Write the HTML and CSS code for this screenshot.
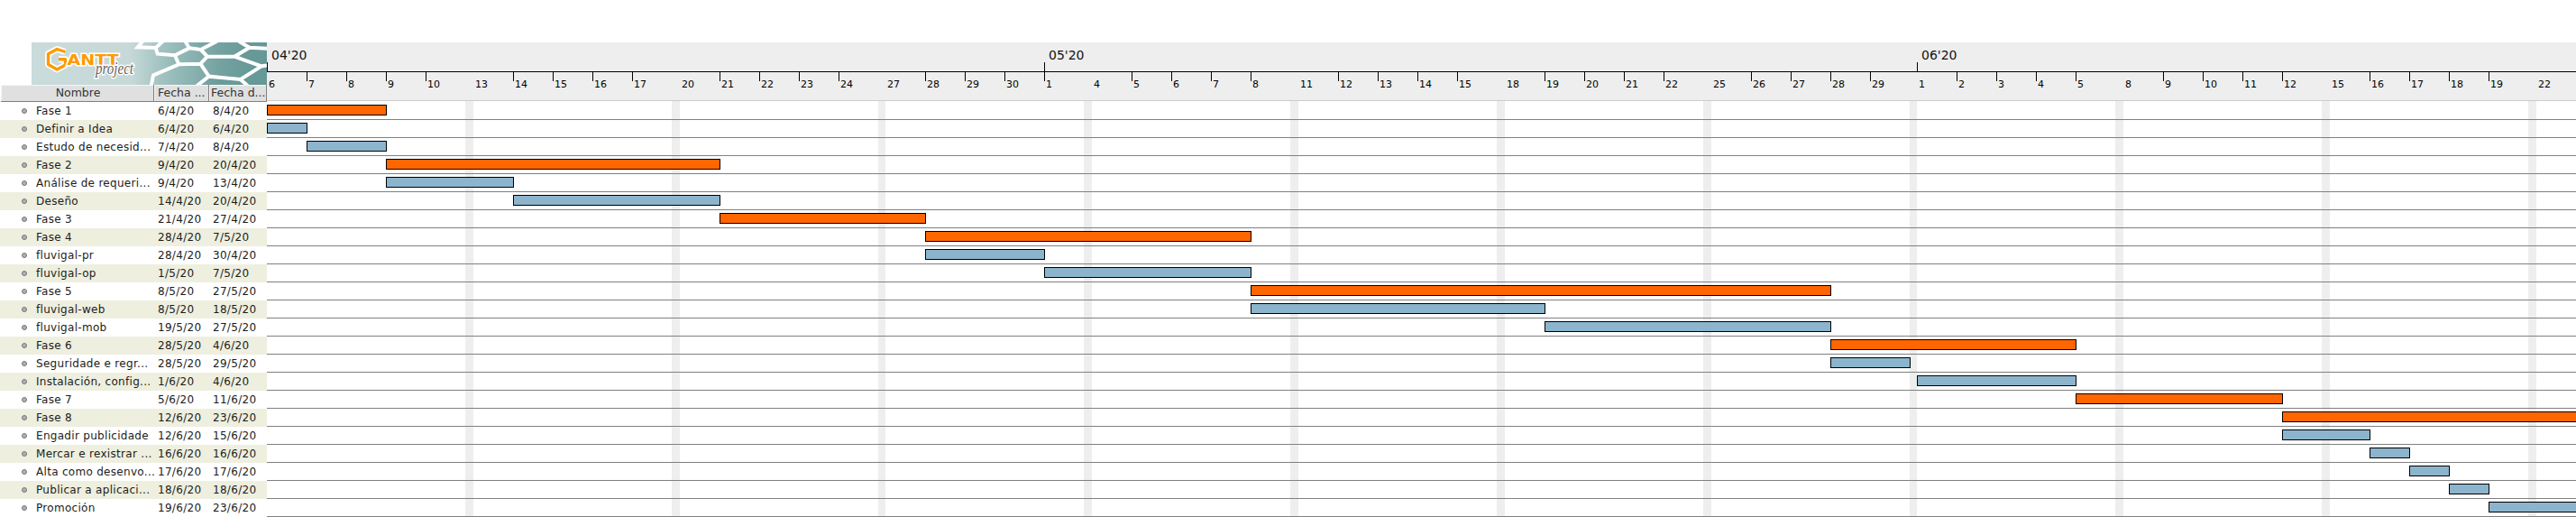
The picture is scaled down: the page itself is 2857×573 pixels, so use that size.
FILE: index.html
```html
<!DOCTYPE html>
<html lang="gl">
<head>
<meta charset="utf-8">
<title>GanttProject</title>
<link rel="stylesheet" href="styles.css">
</head>
<body>
<div class="app">
  <section class="tasks">
    <svg class="logo" width="261" height="47" viewBox="0 0 261 47">
      <defs>
        <linearGradient id="bg" x1="0" x2="1" y1="0" y2="0">
          <stop offset="0" stop-color="#c9dbda"/><stop offset=".42" stop-color="#c6d9d8"/>
          <stop offset=".62" stop-color="#8fb6b4"/><stop offset=".8" stop-color="#699b99"/><stop offset="1" stop-color="#659896"/>
        </linearGradient>
        <linearGradient id="cell" x1="0" x2="1" y1="0" y2="0">
          <stop offset="0" stop-color="#a9c8c6"/><stop offset="1" stop-color="#5f9492"/>
        </linearGradient>
      </defs>
      <rect width="261" height="47" fill="url(#bg)"/>
      <g transform="translate(115 -3) scale(.33333)">
        <path d="M68 27 90 8H165L180 28 132 50H70ZM145 82 132 50 180 28 218 32 240 62 215 80ZM60 120 145 82H215L245 122 205 152H52ZM218 32 268 8H345L380 26 330 56 240 56ZM240 62 330 56 420 88 350 132 245 122 215 80Z" fill="url(#cell)" opacity=".6"/>
        <path d="M25 5 8 25 68 27 92 5M68 27 74 47 132 52 180 28 166 5M180 28 218 33 272 5M218 33 240 56 330 56 380 26 345 5M380 26 440 29M330 56 420 88 440 85M420 88 350 132 376 155M350 132 245 122 203 155M245 122 217 80 240 56M217 80 145 82 132 52M145 82 60 118 53 155" fill="none" stroke="#fff" stroke-width="12"/>
      </g>
      <path class="halo" d="M37.5 10.5 28.3 7.5 18.5 12.7V24.5L28.3 30 37.5 25V18.7H30"/>
      <path class="hex" d="M37.5 10.5 28.3 7.5 18.5 12.7V24.5L28.3 30 37.5 25V18.7H30"/>
      <text class="brand" x="39.5" y="24.7" textLength="57" lengthAdjust="spacingAndGlyphs">ANTT</text>
      <text class="sub" x="71" y="35" textLength="42" lengthAdjust="spacingAndGlyphs">project</text>
    </svg>
    <div class="head"><span>Nombre</span><span>Fecha ...</span><span>Fecha d...</span></div>
    <div class="task"><i></i><b>Fase 1</b><span>6/4/20</span><span>8/4/20</span></div>
    <div class="task"><i></i><b>Definir a Idea</b><span>6/4/20</span><span>6/4/20</span></div>
    <div class="task"><i></i><b>Estudo de necesid...</b><span>7/4/20</span><span>8/4/20</span></div>
    <div class="task"><i></i><b>Fase 2</b><span>9/4/20</span><span>20/4/20</span></div>
    <div class="task"><i></i><b>Análise de requeri...</b><span>9/4/20</span><span>13/4/20</span></div>
    <div class="task"><i></i><b>Deseño</b><span>14/4/20</span><span>20/4/20</span></div>
    <div class="task"><i></i><b>Fase 3</b><span>21/4/20</span><span>27/4/20</span></div>
    <div class="task"><i></i><b>Fase 4</b><span>28/4/20</span><span>7/5/20</span></div>
    <div class="task"><i></i><b>fluvigal-pr</b><span>28/4/20</span><span>30/4/20</span></div>
    <div class="task"><i></i><b>fluvigal-op</b><span>1/5/20</span><span>7/5/20</span></div>
    <div class="task"><i></i><b>Fase 5</b><span>8/5/20</span><span>27/5/20</span></div>
    <div class="task"><i></i><b>fluvigal-web</b><span>8/5/20</span><span>18/5/20</span></div>
    <div class="task"><i></i><b>fluvigal-mob</b><span>19/5/20</span><span>27/5/20</span></div>
    <div class="task"><i></i><b>Fase 6</b><span>28/5/20</span><span>4/6/20</span></div>
    <div class="task"><i></i><b>Seguridade e regr...</b><span>28/5/20</span><span>29/5/20</span></div>
    <div class="task"><i></i><b>Instalación, config...</b><span>1/6/20</span><span>4/6/20</span></div>
    <div class="task"><i></i><b>Fase 7</b><span>5/6/20</span><span>11/6/20</span></div>
    <div class="task"><i></i><b>Fase 8</b><span>12/6/20</span><span>23/6/20</span></div>
    <div class="task"><i></i><b>Engadir publicidade</b><span>12/6/20</span><span>15/6/20</span></div>
    <div class="task"><i></i><b>Mercar e rexistrar ...</b><span>16/6/20</span><span>16/6/20</span></div>
    <div class="task"><i></i><b>Alta como desenvo...</b><span>17/6/20</span><span>17/6/20</span></div>
    <div class="task"><i></i><b>Publicar a aplicaci...</b><span>18/6/20</span><span>18/6/20</span></div>
    <div class="task"><i></i><b>Promoción</b><span>19/6/20</span><span>23/6/20</span></div>
  </section>

  <section class="chart">
    <div class="months">
      <div style="width:862px">04'20</div><div style="width:968px">05'20</div><div style="width:731px">06'20</div>
    </div>
    <div class="days">
      <span class="bare">6</span><span>7</span><span>8</span><span>9</span><span>10</span><u></u>
      <span class="bare">13</span><span>14</span><span>15</span><span>16</span><span>17</span><u></u>
      <span class="bare">20</span><span>21</span><span>22</span><span>23</span><span>24</span><u class="narrow"></u>
      <span class="bare">27</span><span>28</span><span>29</span><span>30</span><span>1</span><u></u>
      <span class="bare">4</span><span>5</span><span>6</span><span>7</span><span>8</span><u></u>
      <span class="bare">11</span><span>12</span><span>13</span><span>14</span><span>15</span><u></u>
      <span class="bare">18</span><span>19</span><span>20</span><span>21</span><span>22</span><u></u>
      <span class="bare">25</span><span>26</span><span>27</span><span>28</span><span>29</span><u class="narrow"></u>
      <span class="bare">1</span><span>2</span><span>3</span><span>4</span><span>5</span><u></u>
      <span class="bare">8</span><span>9</span><span>10</span><span>11</span><span>12</span><u></u>
      <span class="bare">15</span><span>16</span><span>17</span><span>18</span><span>19</span><u></u>
      <span class="bare">22</span>
    </div>
    <div class="plot">
      <div class="weekends">
        <u></u><u></u><u class="narrow"></u><u></u><u></u><u></u><u></u><u class="narrow"></u><u></u><u></u><u></u>
      </div>
      <div class="row"><div class="bar phase" style="margin-left:0;width:133px"></div></div>
      <div class="row"><div class="bar" style="margin-left:0;width:45px"></div></div>
      <div class="row"><div class="bar" style="margin-left:44px;width:89px"></div></div>
      <div class="row"><div class="bar phase" style="margin-left:132px;width:371px"></div></div>
      <div class="row"><div class="bar" style="margin-left:132px;width:142px"></div></div>
      <div class="row"><div class="bar" style="margin-left:273px;width:230px"></div></div>
      <div class="row"><div class="bar phase" style="margin-left:502px;width:229px"></div></div>
      <div class="row"><div class="bar phase" style="margin-left:730px;width:362px"></div></div>
      <div class="row"><div class="bar" style="margin-left:730px;width:133px"></div></div>
      <div class="row"><div class="bar" style="margin-left:862px;width:230px"></div></div>
      <div class="row"><div class="bar phase" style="margin-left:1091px;width:644px"></div></div>
      <div class="row"><div class="bar" style="margin-left:1091px;width:327px"></div></div>
      <div class="row"><div class="bar" style="margin-left:1417px;width:318px"></div></div>
      <div class="row"><div class="bar phase" style="margin-left:1734px;width:273px"></div></div>
      <div class="row"><div class="bar" style="margin-left:1734px;width:89px"></div></div>
      <div class="row"><div class="bar" style="margin-left:1830px;width:177px"></div></div>
      <div class="row"><div class="bar phase" style="margin-left:2006px;width:230px"></div></div>
      <div class="row"><div class="bar phase" style="margin-left:2235px;width:371px"></div></div>
      <div class="row"><div class="bar" style="margin-left:2235px;width:98px"></div></div>
      <div class="row"><div class="bar" style="margin-left:2332px;width:45px"></div></div>
      <div class="row"><div class="bar" style="margin-left:2376px;width:45px"></div></div>
      <div class="row"><div class="bar" style="margin-left:2420px;width:45px"></div></div>
      <div class="row"><div class="bar" style="margin-left:2464px;width:142px"></div></div>
    </div>
  </section>
</div>
</body>
</html>
```

FILE: styles.css
```css
* { box-sizing: border-box; }
body {
  margin: 0;
  background: #fff;
  color: #1c1c1c;
  font-family: "DejaVu Sans", Verdana, sans-serif;
  overflow: hidden;
}
.app { display: flex; height: 573px; padding-top: 47px; }

/* task table */
.tasks { flex: 0 0 296px; width: 296px; }
.logo { display: block; margin-left: 35px; }
.halo, .hex { fill: none; stroke-linejoin: round; }
.halo { stroke: #fff; stroke-width: 7; }
.hex { stroke: #ff9a00; stroke-width: 3.4; }
.brand {
  font: bold 16.5px "DejaVu Sans", sans-serif;
  fill: #ff9a00;
  stroke: #fff;
  stroke-width: 3;
  paint-order: stroke;
}
.sub {
  font: italic 19px "Liberation Serif", serif;
  fill: #666;
  stroke: #fff;
  stroke-width: 3;
  paint-order: stroke;
}
.head {
  display: grid;
  grid-template-columns: 170px 61px 64px;
  height: 19px;
  padding-left: 1px;
  font-size: 12.5px;
  line-height: 18px;
  color: #333;
}
.head span {
  overflow: hidden;
  white-space: nowrap;
  background: #e0e0e0;
  border: solid #808080;
  border-width: 0 1px 1px 0;
  box-shadow: inset 1px 1px #f6f6f6;
  padding-left: 4px;
}
.head span:first-child { padding: 0 0 0 2px; text-align: center; }
.head span:last-child { padding-left: 2px; }
.task {
  display: grid;
  grid-template-columns: 40px 135px 61px 60px;
  align-items: center;
  height: 20px;
  font-size: 12px;
  line-height: 20px;
  letter-spacing: .3px;
  white-space: nowrap;
}
.task:nth-child(odd) { background: #fff; }
.task:nth-child(even) { background: #eeefdf; }
.task b { font-weight: normal; }
.task i {
  width: 6px;
  height: 6px;
  margin-left: 24px;
  border: 1px solid #777;
  border-radius: 50%;
  background: #b0b0b0;
}

/* timeline header */
.chart { flex: 1; min-width: 0; overflow: hidden; }
.months {
  display: flex;
  height: 33px;
  background: #eee;
  border-bottom: 1px solid #000;
  font-size: 14px;
  color: #111;
}
.months div {
  flex: none;
  padding: 5px 0 0 5px;
  line-height: 18px;
  background: linear-gradient(#000, #000) 0 100% / 1px 10px no-repeat;
}
.days {
  display: flex;
  height: 32px;
  background: #eee;
  border-bottom: 1px solid #ccc;
  font-size: 11px;
  color: #000;
}
.days span {
  flex: 0 0 44px;
  padding: 7px 0 0 2px;
  line-height: 14px;
  background: linear-gradient(#000, #000) 0 0 / 1px 10px no-repeat;
}
.days .bare { background: none; }
.days u { flex: 0 0 9px; }
.days .narrow { flex-basis: 8px; }

/* plot area */
.plot { position: relative; }
.weekends {
  position: absolute;
  inset: 0;
  display: flex;
  gap: 220px;
  padding-left: 220px;
}
.weekends u { flex: 0 0 9px; background: #eee; }
.weekends .narrow { flex-basis: 8px; }
.row {
  position: relative;
  height: 20px;
  padding-top: 3px;
  border-bottom: 1px solid #808080;
}
.row:nth-child(2) { height: 21px; padding-top: 4px; }
.bar { height: 12px; border: 1px solid #000; background: #8cb4cd; }
.phase { background: #f60; }
```
